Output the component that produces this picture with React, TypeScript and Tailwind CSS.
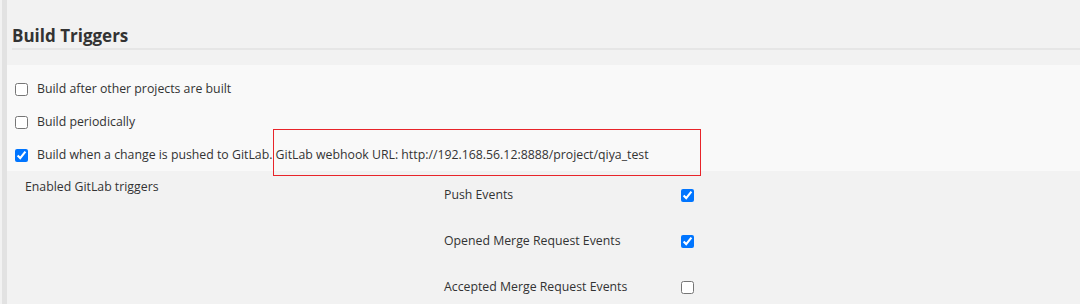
import React from "react";

function Box({ checked }: { checked?: boolean }) {
  return (
    <input
      type="checkbox"
      defaultChecked={checked}
      className="m-0 h-[13px] w-[13px] shrink-0 accent-[#0075ff]"
    />
  );
}

export default function App() {
  const font = { fontFamily: '"Open Sans", "Noto Sans", sans-serif' };
  return (
    <div
      className="relative h-[304px] w-[1080px] overflow-hidden bg-[#f2f2f2] pl-[2px] text-[#333]"
      style={font}
    >
      <div className="h-full border-l-[5px] border-[#e2e2e2]">
        <div className="pl-[5px] pt-[25px]">
          <h2 className="text-[17px] font-bold leading-[22px] text-[#333]">Build Triggers</h2>
          <div className="mt-[1px] h-[2px] bg-[#e6e6e6]" />
        </div>
        <div className="mt-[15px] flex h-[106px] flex-col bg-[#f9f9f9] pl-[8px] pt-[14px] text-[12.3px]">
          <label className="flex h-[20px] items-center gap-[9px]">
            <Box />
            <span>Build after other projects are built</span>
          </label>
          <label className="mt-[13px] flex h-[20px] items-center gap-[9px]">
            <Box />
            <span>Build periodically</span>
          </label>
          <label className="mt-[13px] flex h-[20px] items-center gap-[9px]">
            <Box checked />
            <span>Build when a change is pushed to GitLab. GitLab webhook URL: http://192.168.56.12:8888/project/qiya_test</span>
          </label>
        </div>
        <div className="flex pl-[18px] pt-[6px] text-[12.3px]">
          <div className="w-[419px] leading-[20px]">Enabled GitLab triggers</div>
          <div className="flex flex-col pt-[8px]">
            {[
              ["Push Events", true],
              ["Opened Merge Request Events", true],
              ["Accepted Merge Request Events", false],
            ].map(([t, c], i) => (
              <div key={i} className="flex h-[20px] items-center mb-[26px]">
                <span className="w-[237px]">{t as string}</span>
                <Box checked={c as boolean} />
              </div>
            ))}
          </div>
        </div>
      </div>
      <div className="pointer-events-none absolute left-[273px] top-[129px] h-[47px] w-[428px] border border-[#e8242a]" />
    </div>
  );
}
